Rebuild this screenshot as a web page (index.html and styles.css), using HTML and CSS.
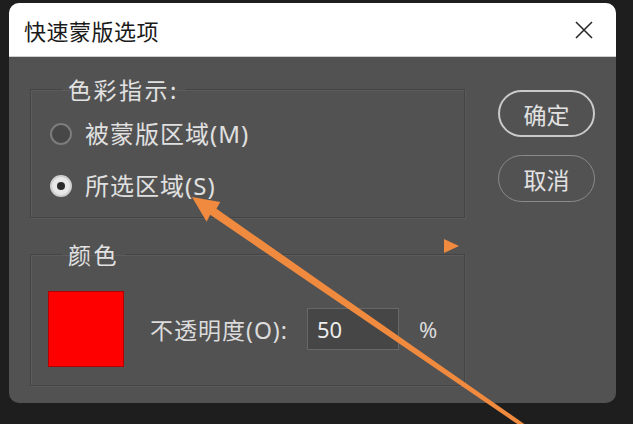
FILE: index.html
```html
<!DOCTYPE html>
<html lang="zh-CN">
<head>
<meta charset="utf-8">
<title>快速蒙版选项</title>
<link rel="stylesheet" href="styles.css">
</head>
<body>
<div class="page">
  <div class="dialog">
    <div class="titlebar">
      <span class="title">快速蒙版选项</span>
      <svg class="close" width="18" height="18" viewBox="0 0 18 18"><path d="M1 1 L17 17 M17 1 L1 17" stroke="#2a2a2a" stroke-width="1.6" fill="none"/></svg>
    </div>
    <div class="content">
      <div class="left">
        <fieldset class="group group-indicate">
          <legend>色彩指示:</legend>
          <div class="row"><span class="radio"></span><span class="rlabel">被蒙版区域(M)</span></div>
          <div class="row"><span class="radio checked"></span><span class="rlabel">所选区域(S)</span></div>
        </fieldset>
        <fieldset class="group group-color">
          <legend>颜色</legend>
          <span class="tri"></span>
          <div class="color-row">
            <span class="swatch"></span>
            <span class="olabel">不透明度(O):</span>
            <span class="input">50</span>
            <span class="pct">%</span>
          </div>
        </fieldset>
      </div>
      <div class="buttons">
        <button class="btn btn-ok">确定</button>
        <button class="btn btn-cancel">取消</button>
      </div>
    </div>
  </div>
</div>
<svg class="arrow" width="633" height="424" viewBox="0 0 633 424">
  <polygon fill="#ef8a3e" points="192,197 220.2,201.9 216.5,208.8 530.5,428.3 528.3,431.5 210.2,214.8 206.6,221.7"/>
</svg>
</body>
</html>
```

FILE: styles.css
```css
html, body {
  margin: 0;
  padding: 0;
}
body {
  width: 633px;
  height: 424px;
  overflow: hidden;
  background: #1e1e1e;
  font-family: "Noto Sans", "Noto Sans CJK SC", sans-serif;
  color: #dedede;
  position: relative;
}
.page {
  padding: 3px 17px 0 9px;
}
.dialog {
  width: 607px;
  height: 400px;
  background: #525252;
  border-radius: 10px;
  overflow: hidden;
}
.titlebar {
  height: 54px;
  box-sizing: border-box;
  background: #ffffff;
  border-bottom: 1px solid #cfcfcf;
  display: flex;
  align-items: center;
  justify-content: space-between;
  padding: 0 23px 0 15px;
}
.title {
  font-size: 22px;
  letter-spacing: 0.5px;
  color: #1a1a1a;
  font-family: "Noto Sans CJK SC", sans-serif;
}
.close {
  display: block;
}
.content {
  display: flex;
  gap: 33px;
  padding: 18px 21px 0 21px;
}
.left {
  width: 435px;
  display: flex;
  flex-direction: column;
}
.group {
  margin: 0;
  border: 1px solid #444444;
  box-shadow: inset 1px 1px 0 #5c5c5c, 1px 1px 0 #5a5a5a;
  min-width: 0;
  position: relative;
  padding: 13px 17px 13px 17px;
}
.group legend {
  font-family: "Noto Sans CJK SC", sans-serif;
  font-size: 23px;
  line-height: 28px;
  letter-spacing: 2.5px;
  padding: 0 6px;
  margin-left: 14px;
  color: #e2e2e2;
}
.group-indicate {
  display: flex;
  flex-direction: column;
  gap: 16px;
}
.row {
  height: 36px;
  display: flex;
  align-items: center;
  gap: 13px;
}
.radio {
  width: 22px;
  height: 22px;
  box-sizing: border-box;
  border-radius: 50%;
  border: 2px solid #7c7c7c;
  background: #474747;
  margin-left: 2px;
  display: flex;
  align-items: center;
  justify-content: center;
}
.radio.checked {
  background: #e8e8e8;
  border-color: #cfcfcf;
}
.radio.checked::after {
  content: "";
  width: 8px;
  height: 8px;
  border-radius: 50%;
  background: #2b2b2b;
}
.rlabel {
  font-size: 24px;
  line-height: 28px;
  letter-spacing: 1px;
  color: #e0e0e0;
}
.group-color {
  margin-top: 22px;
  padding: 23px 17px 18px 17px;
}
.tri {
  position: absolute;
  right: 5px;
  top: -29px;
  width: 0;
  height: 0;
  border-top: 7px solid transparent;
  border-bottom: 7px solid transparent;
  border-left: 15px solid #ef8a3e;
}
.color-row {
  display: flex;
  align-items: center;
}
.swatch {
  width: 76px;
  height: 76px;
  box-sizing: border-box;
  background: #ff0000;
  border: 1px solid #b40000;
}
.olabel {
  margin-left: 26px;
  font-size: 23px;
  letter-spacing: 1px;
  color: #dcdcdc;
}
.input {
  margin-left: 19px;
  width: 92px;
  height: 42px;
  box-sizing: border-box;
  background: #464646;
  border: 1px solid #686868;
  color: #ececec;
  font-size: 22px;
  line-height: 40px;
  padding-left: 9px;
}
.pct {
  margin-left: 20px;
  font-size: 22px;
  color: #dcdcdc;
}
.buttons {
  width: 97px;
  display: flex;
  flex-direction: column;
  gap: 18px;
  padding-top: 15px;
}
.btn {
  width: 97px;
  height: 47px;
  box-sizing: border-box;
  border-radius: 24px;
  background: transparent;
  color: #e2e2e2;
  font-family: "Noto Sans CJK SC", sans-serif;
  font-size: 23px;
  padding: 0;
}
.btn-ok {
  border: 2px solid #cacaca;
}
.btn-cancel {
  border: 1.5px solid #8a8a8a;
}
.arrow {
  position: absolute;
  left: 0;
  top: 0;
  pointer-events: none;
}
```
